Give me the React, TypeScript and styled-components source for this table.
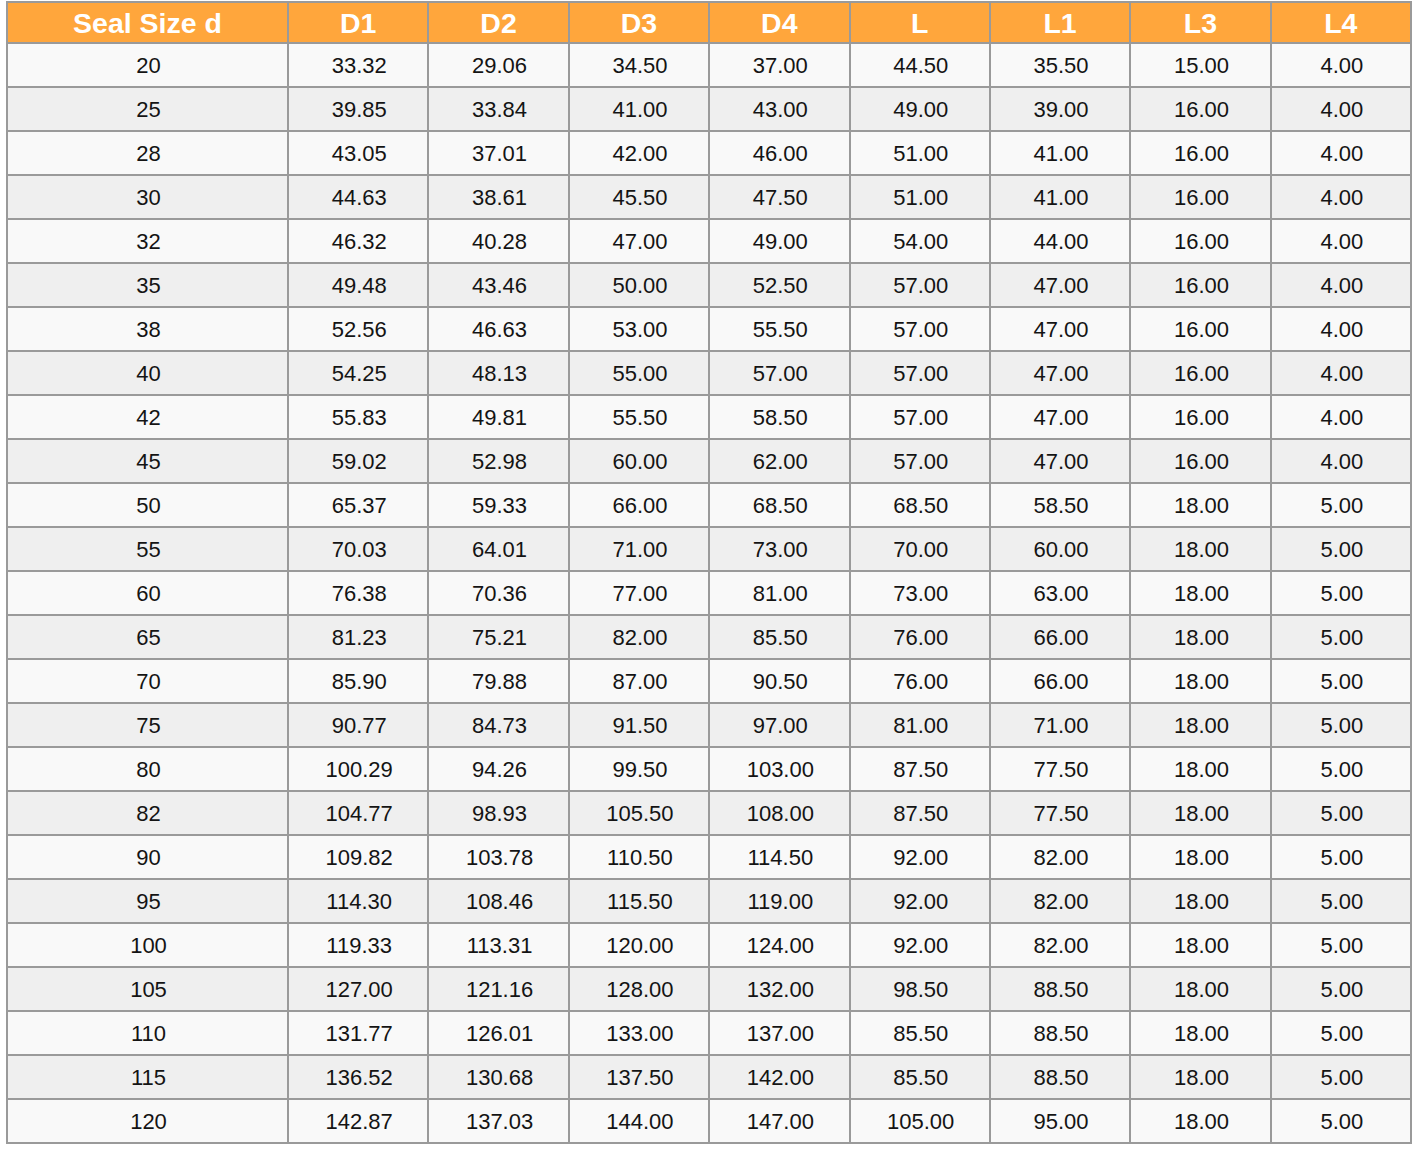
import styled, { createGlobalStyle } from "styled-components";

const GlobalStyle = createGlobalStyle`
  body {
    margin: 0;
    background: #ffffff;
    font-family: "Liberation Sans", Arial, Helvetica, sans-serif;
  }
`;

const headers = ["Seal Size d", "D1", "D2", "D3", "D4", "L", "L1", "L3", "L4"];

const rows: string[][] = [
  ["20", "33.32", "29.06", "34.50", "37.00", "44.50", "35.50", "15.00", "4.00"],
  ["25", "39.85", "33.84", "41.00", "43.00", "49.00", "39.00", "16.00", "4.00"],
  ["28", "43.05", "37.01", "42.00", "46.00", "51.00", "41.00", "16.00", "4.00"],
  ["30", "44.63", "38.61", "45.50", "47.50", "51.00", "41.00", "16.00", "4.00"],
  ["32", "46.32", "40.28", "47.00", "49.00", "54.00", "44.00", "16.00", "4.00"],
  ["35", "49.48", "43.46", "50.00", "52.50", "57.00", "47.00", "16.00", "4.00"],
  ["38", "52.56", "46.63", "53.00", "55.50", "57.00", "47.00", "16.00", "4.00"],
  ["40", "54.25", "48.13", "55.00", "57.00", "57.00", "47.00", "16.00", "4.00"],
  ["42", "55.83", "49.81", "55.50", "58.50", "57.00", "47.00", "16.00", "4.00"],
  ["45", "59.02", "52.98", "60.00", "62.00", "57.00", "47.00", "16.00", "4.00"],
  ["50", "65.37", "59.33", "66.00", "68.50", "68.50", "58.50", "18.00", "5.00"],
  ["55", "70.03", "64.01", "71.00", "73.00", "70.00", "60.00", "18.00", "5.00"],
  ["60", "76.38", "70.36", "77.00", "81.00", "73.00", "63.00", "18.00", "5.00"],
  ["65", "81.23", "75.21", "82.00", "85.50", "76.00", "66.00", "18.00", "5.00"],
  ["70", "85.90", "79.88", "87.00", "90.50", "76.00", "66.00", "18.00", "5.00"],
  ["75", "90.77", "84.73", "91.50", "97.00", "81.00", "71.00", "18.00", "5.00"],
  ["80", "100.29", "94.26", "99.50", "103.00", "87.50", "77.50", "18.00", "5.00"],
  ["82", "104.77", "98.93", "105.50", "108.00", "87.50", "77.50", "18.00", "5.00"],
  ["90", "109.82", "103.78", "110.50", "114.50", "92.00", "82.00", "18.00", "5.00"],
  ["95", "114.30", "108.46", "115.50", "119.00", "92.00", "82.00", "18.00", "5.00"],
  ["100", "119.33", "113.31", "120.00", "124.00", "92.00", "82.00", "18.00", "5.00"],
  ["105", "127.00", "121.16", "128.00", "132.00", "98.50", "88.50", "18.00", "5.00"],
  ["110", "131.77", "126.01", "133.00", "137.00", "85.50", "88.50", "18.00", "5.00"],
  ["115", "136.52", "130.68", "137.50", "142.00", "85.50", "88.50", "18.00", "5.00"],
  ["120", "142.87", "137.03", "144.00", "147.00", "105.00", "95.00", "18.00", "5.00"],
];

const Page = styled.div`
  padding: 1px 0 0 6px;
`;

const Grid = styled.div`
  width: 1406px;
  box-sizing: border-box;
  display: grid;
  grid-template-columns: 279px repeat(8, 1fr);
  grid-template-rows: 39px;
  grid-auto-rows: 42px;
  gap: 2px;
  padding: 2px;
  background: #9a9a9a;
`;

const HeadCell = styled.div`
  display: flex;
  align-items: center;
  justify-content: center;
  background: #ffa63c;
  color: #ffffff;
  font-size: 28.5px;
  font-weight: 700;
  padding-top: 1px;
`;

const Cell = styled.div<{ $alt: boolean }>`
  display: flex;
  align-items: center;
  justify-content: center;
  background: ${(p) => (p.$alt ? "#efefef" : "#f9f9f9")};
  color: #141414;
  font-size: 22px;
  padding: 2px 0 0 2px;
`;

export default function App() {
  return (
    <>
      <GlobalStyle />
      <Page>
        <Grid>
          {headers.map((h) => (
            <HeadCell key={h}>{h}</HeadCell>
          ))}
          {rows.map((r, i) =>
            r.map((v, j) => (
              <Cell key={`${i}-${j}`} $alt={i % 2 === 1}>
                {v}
              </Cell>
            ))
          )}
        </Grid>
      </Page>
    </>
  );
}
